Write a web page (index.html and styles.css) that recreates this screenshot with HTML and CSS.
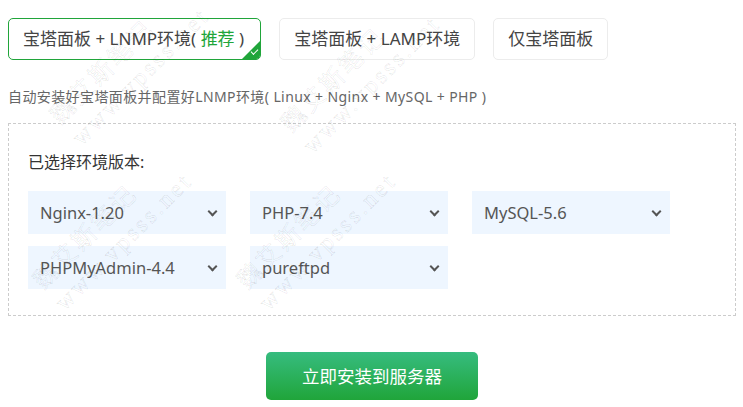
FILE: index.html
```html
<!DOCTYPE html>
<html lang="zh-CN">
<head>
	<meta charset="UTF-8">
	<title>一键安装</title>
	<link rel="stylesheet" href="styles.css">
</head>
<body>
	<div class="wrap">
		<!-- 安装方式 -->
		<ul class="tabs">
			<li class="tab on">宝塔面板 + LNMP环境( <em>推荐</em> )<span class="tick"></span></li>
			<li class="tab">宝塔面板 + LAMP环境</li>
			<li class="tab">仅宝塔面板</li>
		</ul>
		<p class="desc">自动安装好宝塔面板并配置好LNMP环境( Linux + Nginx + MySQL + PHP )</p>

		<!-- 环境版本 -->
		<div class="env">
			<p class="env-tit">已选择环境版本:</p>
			<div class="env-list">
				<div class="sel">Nginx-1.20<i class="arr"></i></div>
				<div class="sel">PHP-7.4<i class="arr"></i></div>
				<div class="sel">MySQL-5.6<i class="arr"></i></div>
				<div class="sel">PHPMyAdmin-4.4<i class="arr"></i></div>
				<div class="sel">pureftpd<i class="arr"></i></div>
			</div>
		</div>

		<div class="btn-box">
			<a class="btn" href="#">立即安装到服务器</a>
		</div>
	</div>

	<!-- 水印 -->
	<div class="mark m1">魏艾斯笔记<br>www.vpsss.net</div>
	<div class="mark m2">魏艾斯笔记<br>www.vpsss.net</div>
	<div class="mark m3">魏艾斯笔记<br>www.vpsss.net</div>
	<div class="mark m4">魏艾斯笔记<br>www.vpsss.net</div>
</body>
</html>
```

FILE: styles.css
```css
html,body,ul,p{
	margin: 0;
	padding: 0;
}
body{
	background: #fff;
	font-family: "Noto Sans", "Noto Sans CJK SC", sans-serif;
	color: #333;
	overflow: hidden;
}
ul{
	list-style: none;
}
.wrap{
	padding: 18px 7px 0 8px;
}

/* 탭 */
.tabs{
	display: flex;
	gap: 18px;
}
.tab{
	position: relative;
	height: 40px;
	line-height: 40px;
	padding: 0 14px;
	border: 1px solid #ececec;
	border-radius: 5px;
	font-size: 17px;
	color: #444;
	overflow: hidden;
}
.tab.on{
	padding-right: 16px;
	border-color: #20a53a;
}
.tab em{
	font-style: normal;
	color: #20a53a;
}
.tick{
	position: absolute;
	right: 0;
	bottom: 0;
	width: 0;
	height: 0;
	border-left: 18px solid transparent;
	border-bottom: 18px solid #20a53a;
}
.tick::after{
	content: "";
	position: absolute;
	left: -9px;
	top: 8px;
	width: 6px;
	height: 3px;
	border-left: 1px solid #fff;
	border-bottom: 1px solid #fff;
	transform: rotate(-45deg);
}
.desc{
	margin-top: 26px;
	font-size: 14px;
	line-height: 22px;
	letter-spacing: .4px;
	color: #666;
}

/* 버전 박스 */
.env{
	margin-top: 15px;
	border: 1px dashed #ccc;
	padding: 26px 19px 26px;
}
.env-tit{
	font-size: 16px;
	line-height: 24px;
	color: #333;
}
.env-list{
	display: grid;
	grid-template-columns: repeat(3, 198px);
	gap: 12px 24px;
	margin-top: 17px;
}
.sel{
	position: relative;
	height: 43px;
	line-height: 43px;
	padding-left: 12px;
	background: #eef6ff;
	font-size: 16.5px;
	color: #555;
}
.arr{
	position: absolute;
	right: 10px;
	top: 17px;
	width: 5px;
	height: 5px;
	border-right: 2px solid #555;
	border-bottom: 2px solid #555;
	transform: rotate(45deg);
}

/* 버튼 */
.btn-box{
	display: flex;
	justify-content: center;
	margin-top: 36px;
}
.btn{
	display: block;
	width: 212px;
	height: 48px;
	line-height: 48px;
	border-radius: 5px;
	background: linear-gradient(#36bc7f, #20a53a);
	color: #fff;
	text-align: center;
	font-size: 17.5px;
	text-decoration: none;
}

/* 워터마크 */
.mark{
	position: absolute;
	font-family: "Liberation Serif", "Noto Sans CJK SC", serif;
	font-size: 24px;
	line-height: 30px;
	letter-spacing: 3px;
	color: transparent;
	-webkit-text-stroke: .5px rgba(0,0,0,.13);
	transform-origin: 0 0;
	transform: rotate(-45deg);
	white-space: nowrap;
	pointer-events: none;
}
.m1{ top: 109px; left: 44px; }
.m2{ top: 117px; left: 275px; }
.m3{ top: 274px; left: 27px; }
.m4{ top: 274px; left: 231px; }
```
